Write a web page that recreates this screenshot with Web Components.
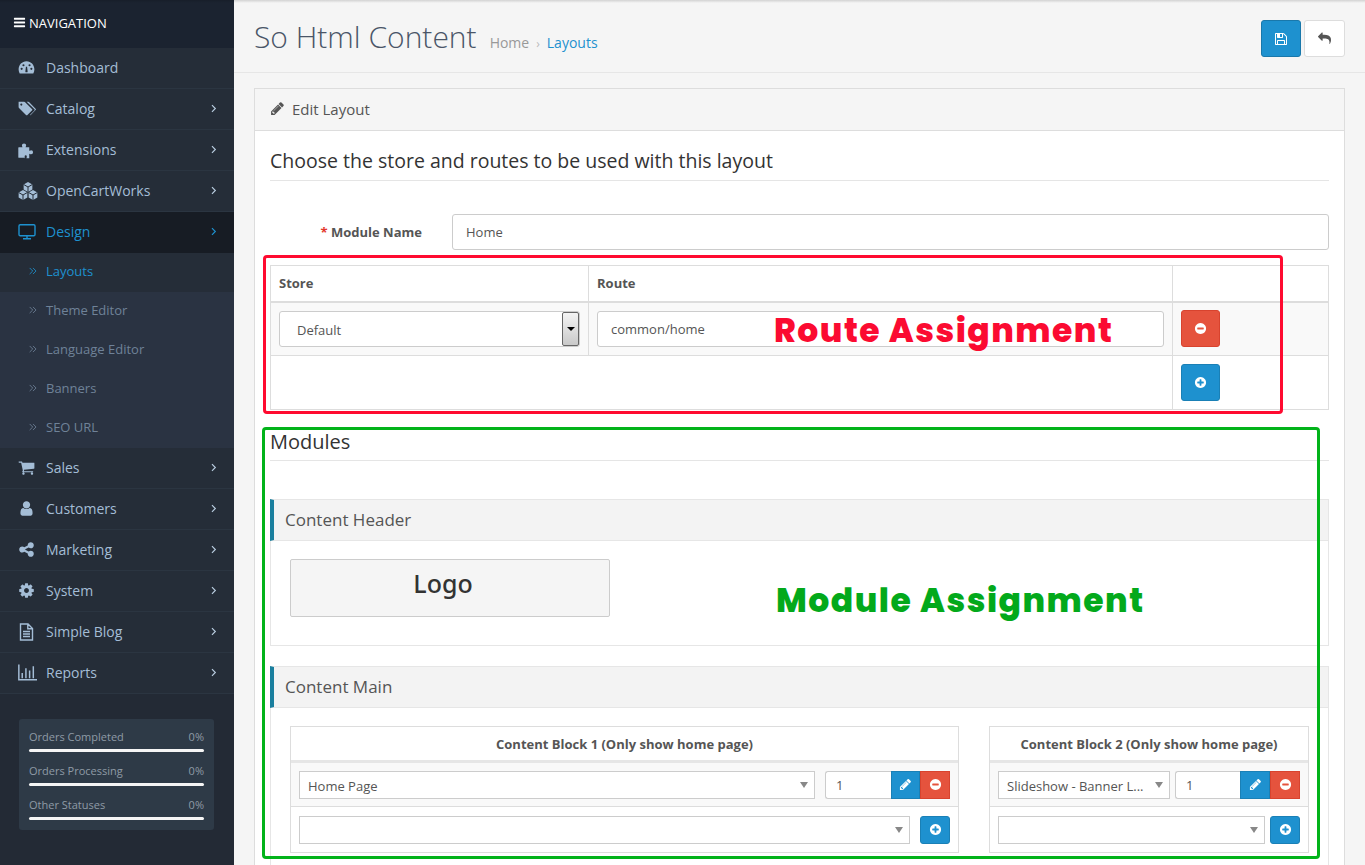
<!DOCTYPE html>
<html lang="en"><head><meta charset="utf-8"><title>So Html Content</title>
<style>
html,body{margin:0;height:865px;overflow:hidden;background:#f5f5f5;font-family:"Open Sans",sans-serif;color:#444}
</style></head><body>
<app-shell>
  <side-bar slot="side">
    <nav-head>NAVIGATION</nav-head>
    <nav-item icon="dashboard">Dashboard</nav-item>
    <nav-item icon="tags" arrow>Catalog</nav-item>
    <nav-item icon="puzzle" arrow>Extensions</nav-item>
    <nav-item icon="cubes" arrow>OpenCartWorks</nav-item>
    <nav-item icon="desktop" arrow active>Design</nav-item>
    <nav-sub active>Layouts</nav-sub>
    <nav-sub>Theme Editor</nav-sub>
    <nav-sub>Language Editor</nav-sub>
    <nav-sub>Banners</nav-sub>
    <nav-sub>SEO URL</nav-sub>
    <nav-item icon="cart" arrow>Sales</nav-item>
    <nav-item icon="user" arrow>Customers</nav-item>
    <nav-item icon="share" arrow>Marketing</nav-item>
    <nav-item icon="cog" arrow>System</nav-item>
    <nav-item icon="file" arrow>Simple Blog</nav-item>
    <nav-item icon="chart" arrow>Reports</nav-item>
    <stat-box>
      <stat-row value="0%">Orders Completed</stat-row>
      <stat-row value="0%">Orders Processing</stat-row>
      <stat-row value="0%">Other Statuses</stat-row>
    </stat-box>
  </side-bar>
  <page-head></page-head>
  <edit-panel>
    <form-legend>Choose the store and routes to be used with this layout</form-legend>
    <name-field></name-field>
    <route-table></route-table>
    <form-legend small>Modules</form-legend>
    <pos-section title="Content Header"><logo-box>Logo</logo-box></pos-section>
    <pos-section title="Content Main" main>
      <module-block style="--w:669px" heading="Content Block 1 (Only show home page)" value="Home Page"></module-block>
      <module-block style="--w:320px" heading="Content Block 2 (Only show home page)" value="Slideshow - Banner L..." narrow></module-block>
    </pos-section>
  </edit-panel>
  <mark-box style="left:263px;top:255px;width:1020px;height:159px;--c:#ff0a30;--t:#fb0b31;--tx:508px;--ty:53px">Route Assignment</mark-box>
  <mark-box style="left:262px;top:427px;width:1058px;height:432px;--c:#02b31a;--t:#03a91b;--tx:511px;--ty:151px">Module Assignment</mark-box>
</app-shell>
<script>
const P={
bars:'M1664 1344v128q0 26-19 45t-45 19h-1408q-26 0-45-19t-19-45v-128q0-26 19-45t45-19h1408q26 0 45 19t19 45zm0-512v128q0 26-19 45t-45 19h-1408q-26 0-45-19t-19-45v-128q0-26 19-45t45-19h1408q26 0 45 19t19 45zm0-512v128q0 26-19 45t-45 19h-1408q-26 0-45-19t-19-45v-128q0-26 19-45t45-19h1408q26 0 45 19t19 45z',
minus:'M1344 960v-128q0-26-19-45t-45-19h-768q-26 0-45 19t-19 45v128q0 26 19 45t45 19h768q26 0 45-19t19-45zm320-64q0 209-103 385.500t-279.500 279.500-385.500 103-385.500-103-279.500-279.500-103-385.500 103-385.500 279.500-279.500 385.500-103 385.500 103 279.500 279.500 103 385.500z',
plus:'M1344 960v-128q0-26-19-45t-45-19h-256v-256q0-26-19-45t-45-19h-128q-26 0-45 19t-19 45v256h-256q-26 0-45 19t-19 45v128q0 26 19 45t45 19h256v256q0 26 19 45t45 19h128q26 0 45-19t19-45v-256h256q26 0 45-19t19-45zm320-64q0 209-103 385.500t-279.500 279.500-385.500 103-385.500-103-279.500-279.500-103-385.500 103-385.500 279.500-279.500 385.500-103 385.500 103 279.500 279.500 103 385.500z',
pencil:'M491 1536l91-91-235-235-91 91v107h128v128h107zm523-928q0-22-22-22-10 0-17 7l-542 542q-7 7-7 17 0 22 22 22 10 0 17-7l542-542q7-7 7-17zm-54-192l416 416-832 832h-416v-416zm683 96q0 53-37 90l-166 166-416-416 166-165q36-38 90-38 53 0 91 38l235 234q37 39 37 91z',
save:'M512 1536h768v-384h-768v384zm896 0h128v-896q0-14-10-38.500t-20-34.500l-281-281q-10-10-34-20t-39-10v416q0 40-28 68t-68 28h-576q-40 0-68-28t-28-68v-416h-128v1280h128v-416q0-40 28-68t68-28h832q40 0 68 28t28 68v416zm-384-928v-320q0-13-9.500-22.500t-22.500-9.500h-192q-13 0-22.500 9.500t-9.500 22.500v320q0 13 9.500 22.500t22.500 9.500h192q13 0 22.500-9.500t9.500-22.500zm640 32v928q0 40-28 68t-68 28h-1344q-40 0-68-28t-28-68v-1344q0-40 28-68t68-28h928q40 0 88 20t76 48l280 280q28 28 48 76t20 88z',
reply:'M1792 1120q0 166-127 451-3 7-10.500 24t-13.500 30-13 22q-12 17-28 17-15 0-23.500-10t-8.500-25q0-9 2.500-26.500t2.500-23.500q5-68 5-123 0-101-17.500-181t-48.500-138.500-80-101-105.500-69.500-133-42.500-154-21.500-175.500-6h-224v256q0 26-19 45t-45 19-45-19l-512-512q-19-19-19-45t19-45l512-512q19-19 45-19t45 19 19 45v256h224q713 0 875 403 53 134 53 333z',
cog:'M1152 896q0-106-75-181t-181-75-181 75-75 181 75 181 181 75 181-75 75-181zm512-109v222q0 12-8 23t-20 13l-185 28q-19 54-39 91 35 50 107 138 10 12 10 25t-9 23q-27 37-99 108t-94 71q-12 0-26-9l-138-108q-44 23-91 38-16 136-29 186-7 28-36 28h-222q-14 0-24.500-8.500t-11.500-21.500l-28-184q-49-16-90-37l-141 107q-10 9-25 9-14 0-25-11-126-114-165-168-7-10-7-23 0-12 8-23 15-21 51-66.500t54-70.500q-27-50-41-99l-183-27q-13-2-21-12.500t-8-23.500v-222q0-12 8-23t19-13l186-28q14-46 39-92-40-57-107-138-10-12-10-24 0-10 9-23 26-36 98.500-107.500t94.500-71.500q13 0 26 10l138 107q44-23 91-38 16-136 29-186 7-28 36-28h222q14 0 24.500 8.500t11.500 21.500l28 184q49 16 90 37l142-107q9-9 24-9 13 0 25 10 129 119 165 170 7 8 7 22 0 12-8 23-15 21-51 66.500t-54 70.500q26 50 41 98l183 28q13 2 21 12.500t8 23.500z',
user:'M1536 1399q0 109-62.500 187t-150.500 78h-854q-88 0-150.500-78t-62.500-187q0-85 8.500-160.500t31.500-152 58.500-131 94-89 134.500-34.500q131 128 313 128t313-128q76 0 134.500 34.500t94 89 58.500 131 31.500 152 8.500 160.500zm-256-887q0 159-112.500 271.500t-271.500 112.500-271.500-112.500-112.500-271.500 112.500-271.500 271.500-112.500 271.500 112.500 112.500 271.500z',
share:'M1344 1024q133 0 226.500 93.500t93.500 226.500-93.500 226.500-226.500 93.500-226.500-93.500-93.500-226.500q0-12 2-34l-360-180q-92 86-218 86-133 0-226.500-93.500t-93.500-226.500 93.500-226.500 226.500-93.500q126 0 218 86l360-180q-2-22-2-34 0-133 93.500-226.500t226.500-93.500 226.500 93.500 93.500 226.500-93.500 226.500-226.500 93.500q-126 0-218-86l-360 180q2 22 2 34t-2 34l360 180q92-86 218-86z',
cart:'M704 1536q0 52-38 90t-90 38-90-38-38-90 38-90 90-38 90 38 38 90zm896 0q0 52-38 90t-90 38-90-38-38-90 38-90 90-38 90 38 38 90zm128-1088v512q0 24-16.500 42.500t-40.500 21.500l-1044 122q13 60 13 70 0 16-24 64h920q26 0 45 19t19 45-19 45-45 19h-1024q-26 0-45-19t-19-45q0-11 8-31.500t16-36 21.500-40 15.500-29.500l-177-823h-204q-26 0-45-19t-19-45 19-45 45-19h256q16 0 28.500 6.500t19.500 15.500 13 24.500 8 26 5.500 29.500 4.500 26h1201q26 0 45 19t19 45z',
dashboard:'M896 224c-470 0-832 380-832 860 0 150 36 290 100 410 12 24 36 38 62 38h1340c26 0 50-14 62-38 64-120 100-260 100-410 0-480-362-860-832-860zM384 1152a112 112 0 1 1 0-224 112 112 0 0 1 0 224zm192-384a112 112 0 1 1 0-224 112 112 0 0 1 0 224zm420 640H796l-20-90 60-500h120l60 500zm220-640a112 112 0 1 1 0-224 112 112 0 0 1 0 224zm192 384a112 112 0 1 1 0-224 112 112 0 0 1 0 224z',
tags:'M60 180h560q50 0 90 40l700 700q40 40 0 90l-500 500q-40 40-90 0L100 790q-40-40-40-90zM330 350a105 105 0 1 0 0 210 105 105 0 0 0 0-210zM860 180h170q50 0 90 40l650 670q40 40 0 90l-500 510q-35 35-75 10l440-460q60-60 0-130z',
puzzle:'M680 1660H60q-30 0-30-40V660q0-40 40-40h350q40-10 10-60-40-60-40-130 0-190 210-190t210 190q0 70-40 130-30 50 10 60h340v340q10 40 60 10 60-40 130-40 190 0 190 200t-190 200q-70 0-130-40-50-30-60 10v420H860q-40-10-10-60 30-50 30-100 0-130-110-130t-110 130q0 50 30 100 25 50-20 60z',
};
const STK={
desktop:'<rect x="1" y="1.700" width="16" height="11" rx="1.200"/><path d="M9 12.600v3M5 15.800h8"/>',
file:'<path d="M2.500 1h7.500l4.500 4.500V17h-12zM9.800 1.200v4.500h4.500M5 8.500h7M5 11h7M5 13.500h7"/>',
chart:'<path d="M.8 1.500V15.800h17.400M4 14.500v-5M7.500 14.500V5M11 14.500V7M14.500 14.500V3"/>',
right:'<path d="M6.500 3.500 12 9l-5.500 5.500"/>',
dbl:'<path d="M3 3.500 8.500 9 3 14.500M9 3.500 14.500 9 9 14.500"/>',
};
const FILL_RULE={dashboard:'evenodd',tags:'evenodd'};
function hex(c,d,r){const w=r*.87;return `<path fill="currentColor" d="M${c} ${d-r}L${c+w} ${d-r/2}V${d+r/2}L${c} ${d+r}L${c-w} ${d+r/2}V${d-r/2}Z"/><path fill="none" stroke="#252d38" stroke-width="1" d="M${c-w} ${d-r/2}L${c} ${d}L${c+w} ${d-r/2}M${c} ${d}V${d+r}"/>`}
function ico(n,size,w){
 if(n==='cubes') return `<svg width="${size}" height="${size}" viewBox="0 0 20 20" aria-hidden="true">${hex(10,6,5)}${hex(5,14,5)}${hex(15,14,5)}</svg>`;
 if(STK[n]) return `<svg width="${size}" height="${size}" viewBox="0 0 18 18" fill="none" stroke="currentColor" stroke-width="${w||1.4}" aria-hidden="true">${STK[n]}</svg>`;
 return `<svg width="${size}" height="${size}" viewBox="0 0 1792 1792" fill="currentColor" fill-rule="${FILL_RULE[n]||'nonzero'}" aria-hidden="true"><path d="${P[n]}"/></svg>`;
}
function def(name,html,setup){
 customElements.define(name,class extends HTMLElement{
  constructor(){super();this.attachShadow({mode:'open'})}
  connectedCallback(){this.shadowRoot.innerHTML=typeof html==='function'?html(this):html;if(setup)setup(this)}
 });
}
def('app-shell',`<style>:host{display:flex;position:relative;width:1365px;height:865px;overflow:hidden;align-items:stretch}
.main{flex:1;min-width:0;display:flex;flex-direction:column}
.shade{position:absolute;left:0;right:0;top:0;height:3px;background:linear-gradient(rgba(0,0,0,.14),rgba(0,0,0,0));pointer-events:none}</style>
<slot name="side"></slot><div class="main"><slot></slot></div><div class="shade"></div>`);
def('side-bar',`<style>:host{display:flex;flex-direction:column;width:234px;flex:none;background:#232a35;height:865px}</style><slot></slot>`);
def('nav-head',()=>`<style>:host{display:flex;align-items:center;height:48px;padding:0 0 3px 13px;background:#1b2330;color:#fff;font-size:13px;box-sizing:border-box;gap:3px}
svg{display:block}</style>${ico('bars',13)}<slot></slot>`);
const SIZES={cubes:20,desktop:18,chart:19,tags:18,puzzle:18,dashboard:17,file:18};
def('nav-item',e=>{const a=e.hasAttribute('active');const n=e.getAttribute('icon');return `<style>:host{display:flex;align-items:center;box-sizing:border-box;height:41px;padding:0 15px 1px 18px;font-size:14px;color:${a?'#1e91cf':'#a4bdd6'};background:${a?'#171c24':'#252d38'};border-bottom:1px solid ${a?'#171c24':'#2b3541'}}
.i{width:28px;flex:none;display:flex;align-items:center}.t{flex:1}.a{display:flex;color:${a?'#1e91cf':'#b9cde0'}}</style>
<span class="i">${ico(n,SIZES[n]||17)}</span><span class="t"><slot></slot></span>${e.hasAttribute('arrow')?`<span class="a">${ico('right',11,1.9)}</span>`:''}`});
def('nav-sub',e=>{const a=e.hasAttribute('active');return `<style>:host{display:flex;align-items:center;box-sizing:border-box;height:39px;padding:0 0 4px 28px;font-size:13px;color:${a?'#1e91cf':'#6f8298'};background:${a?'#252d38':'#2a3342'}}
.i{width:18px;display:flex}</style><span class="i">${ico('dbl',10,1.5)}</span><slot></slot>`});
def('stat-box',`<style>:host{display:block;box-sizing:border-box;width:195px;height:111px;margin:25px 0 0 19px;padding:10px 10px 0;background:#2e3a47;border-radius:3px}</style><slot></slot>`);
def('stat-row',e=>`<style>:host{display:block;height:34px;font-size:11px;color:#8f9ba6}
.r{display:flex;justify-content:space-between;height:15px;line-height:15px}.b{height:3px;border-radius:2px;background:#f5f5f5;margin-top:5px}</style>
<div class="r"><span><slot></slot></span><span>${e.getAttribute('value')}</span></div><div class="b"></div>`);
def('page-head',()=>`<style>:host{display:flex;align-items:flex-start;box-sizing:border-box;height:73px;padding:0 20px;border-bottom:1px solid #e6e6e6;background:#f5f5f5;flex:none}
h1{font-size:30px;font-weight:300;margin:16px 0 0;line-height:42px;color:#4a5568;white-space:nowrap}
.bc{font-size:14px;margin:32px 0 0 13px;line-height:20px;color:#999;display:flex;gap:7px;align-items:center}.bc b{font-weight:400;color:#1e91cf}.bc i{font-style:normal;color:#bbb;font-size:12px;margin-top:2px}
.sp{flex:1}.btn{height:37px;box-sizing:border-box;border-radius:3px;display:flex;align-items:center;justify-content:center;margin-top:20px}
.s{width:40px;background:#1e91cf;border:1px solid #1978ab;color:#fff}.u{width:41px;background:#fff;border:1px solid #ddd;color:#555;margin-left:3px}</style>
<h1>So Html Content</h1><div class="bc"><span>Home</span><i>›</i><b>Layouts</b></div><div class="sp"></div>
<div class="btn s">${ico('save',14)}</div><div class="btn u">${ico('reply',13)}</div>`);
def('edit-panel',()=>`<style>:host{display:block;box-sizing:border-box;margin:15px 20px 0;border:1px solid #ddd;border-bottom:0;background:#fff;flex:1;min-height:0}
.h{display:flex;align-items:center;height:42px;box-sizing:border-box;padding:0 0 2px 15px;background:#f5f5f5;border-bottom:1px solid #ddd;font-size:15px;color:#555;gap:7px}
.b{padding:15px}svg{display:block}</style><div class="h">${ico('pencil',15)}<span>Edit Layout</span></div><div class="b"><slot></slot></div>`);
def('form-legend',e=>{const s=e.hasAttribute('small');return `<style>:host{display:block;box-sizing:border-box;color:#333;border-bottom:1px solid #e5e5e5;font-size:${s?'20px':'19.500px'};line-height:30px;height:35px;${s?'margin:16px 0 38px;padding-top:1px':''}}</style><slot></slot>`});
def('name-field',`<style>:host{display:flex;align-items:center;height:36px;margin:33px 0 15px}
label{width:182px;padding-right:30px;box-sizing:border-box;text-align:right;font-size:13px;font-weight:700;color:#555;flex:none}label span{color:#e3362b}
.in{flex:1;box-sizing:border-box;height:36px;border:1px solid #ccc;border-radius:3px;padding:0 13px;font-size:13px;line-height:34px;color:#555}</style>
<label><span>*</span> Module Name</label><div class="in">Home</div>`);
def('icon-btn',e=>{const r=e.getAttribute('kind')==='red';const w=e.getAttribute('w')||39,h=e.getAttribute('h')||37;return `<style>:host{display:flex;align-items:center;justify-content:center;box-sizing:border-box;width:${w}px;height:${h}px;flex:none;color:#fff;background:${r?'#e5533d':'#1e91cf'};border:1px solid ${r?'#d8432e':'#1a80b6'};border-radius:${e.getAttribute('rad')||3}px}svg{display:block}</style>${ico(e.getAttribute('icon'),e.getAttribute('size')||14)}`});
def('route-table',`<style>:host{display:block;font-size:13px;color:#555}
table{border-collapse:collapse;width:1058px;table-layout:fixed}td,th{border:1px solid #ddd;padding:0 8px;box-sizing:border-box;text-align:left}
th{height:36px;border-bottom:2px solid #ddd;font-size:13px;color:#555;font-weight:700}
.even td{background:#f9f9f9}.even td{height:54px}.odd td{height:54px}
.sel{display:flex;align-items:center;box-sizing:border-box;height:36px;border:1px solid #ccc;border-radius:3px;background:#fff;padding:2px 0 0 17px;position:relative}
.ar{position:absolute;right:0;top:0;bottom:0;width:17px;box-sizing:border-box;border:1px solid #666;border-radius:2px;background:linear-gradient(#f4f4f4,#c9c9c9);display:flex;align-items:center;justify-content:center}
.ar:after{content:"";border:4px solid transparent;border-top:4px solid #000;border-bottom:0}
.in{display:flex;align-items:center;box-sizing:border-box;height:36px;border:1px solid #ccc;border-radius:3px;background:#fff;padding-left:13px}</style>
<table><colgroup><col style="width:318px"><col style="width:584px"><col style="width:156px"></colgroup>
<tr><th>Store</th><th>Route</th><th></th></tr>
<tr class="even"><td><div class="sel">Default<span class="ar"></span></div></td><td><div class="in">common/home</div></td><td><icon-btn kind="red" icon="minus" size="13"></icon-btn></td></tr>
<tr class="odd"><td colspan="2"></td><td><icon-btn icon="plus" size="13"></icon-btn></td></tr></table>`);
def('pos-section',e=>`<style>:host{display:block;margin-bottom:20px}
.h{display:flex;align-items:center;box-sizing:border-box;height:42px;background:#f3f3f3;border:1px solid #e6e6e6;border-left:4px solid #1a7f9e;padding:0 0 2px 11px;font-size:17px;color:#555}
.b{box-sizing:border-box;border:1px solid #e6e6e6;border-top:0;padding:${e.hasAttribute('main')?'18px 19px 20px':'18px 19px 28px'};display:flex;gap:30px}</style>
<div class="h">${e.getAttribute('title')}</div><div class="b"><slot></slot></div>`);
def('logo-box',`<style>:host{display:flex;align-items:center;justify-content:center;box-sizing:border-box;width:320px;height:58px;background:#f5f5f5;border:1px solid #ccc;border-radius:2px;font-family:"Noto Sans","Open Sans",sans-serif;font-size:25px;font-weight:500;color:#333;padding-bottom:10px;padding-right:14px}</style><slot></slot>`);
def('module-block',e=>{const n=e.hasAttribute('narrow');const seg=`<span class="tri"></span>`;return `<style>:host{display:block;box-sizing:border-box;width:var(--w);flex:none;border:1px solid #ddd;font-size:13px;color:#555}
.t{height:36px;box-sizing:border-box;border-bottom:3px solid #e6e6e6;display:flex;align-items:center;justify-content:center;font-size:13px;font-weight:700;color:#555}
.r{display:flex;align-items:center;height:45px;box-sizing:border-box;padding:0 8px}.r1{background:#f9f9f9;border-bottom:1px solid #ddd;gap:${n?5:10}px;height:44px}.r2{height:45px;justify-content:space-between}
.sel{display:flex;align-items:center;box-sizing:border-box;height:28px;border:1px solid #ccc;background:#fff;padding:2px 0 0 8px;position:relative;white-space:nowrap;overflow:hidden}
.tri{position:absolute;right:6px;top:10px;border:4.500px solid transparent;border-top:6px solid #888;border-bottom:0}
.grp{display:flex;flex:none}.num{box-sizing:border-box;height:28px;border:1px solid #ccc;border-right:0;border-radius:3px 0 0 3px;background:#fff;padding-left:10px;line-height:26px;width:${n?'65px':'66px'}}</style>
<div class="t">${e.getAttribute('heading')}</div>
<div class="r r1"><div class="sel" style="width:${n?172:516}px">${e.getAttribute('value')}${seg}</div><div class="grp"><div class="num">1</div><icon-btn icon="pencil" w="${n?30:29}" h="28" size="13" rad="0"></icon-btn><icon-btn kind="red" icon="minus" w="30" h="28" size="13" rad="0"></icon-btn></div></div>
<div class="r r2"><div class="sel" style="width:${n?267:611}px">${seg}</div><icon-btn icon="plus" w="30" h="28" size="13"></icon-btn></div>`});
def('mark-box',`<style>:host{position:absolute;box-sizing:border-box;border:3px solid var(--c);border-radius:4px;pointer-events:none}
span{position:absolute;left:var(--tx);top:var(--ty);font-family:Poppins,Inter,sans-serif;font-weight:800;font-size:33px;line-height:40px;letter-spacing:1.480px;white-space:nowrap;color:var(--t)}</style><span><slot></slot></span>`);
</script>
</body></html>
